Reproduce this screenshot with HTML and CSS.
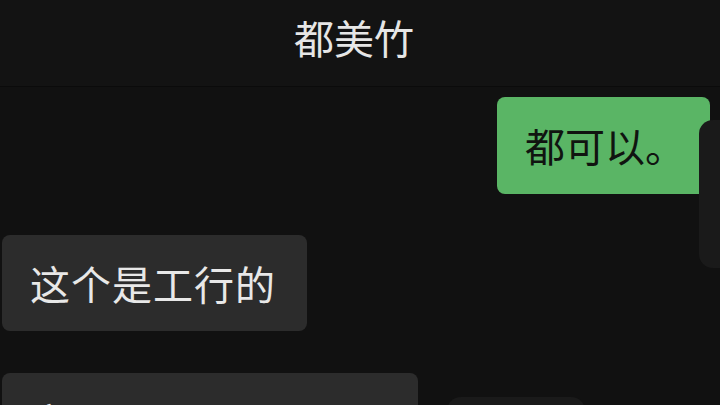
FILE: index.html
```html
<!DOCTYPE html>
<html lang="zh">
<head>
<meta charset="utf-8">
<link rel="stylesheet" href="styles.css">
</head>
<body>
<div class="screen">
  <header class="header">都美竹</header>
  <main class="messages">
    <div class="row row-out"><div class="bubble bubble-out">都可以。</div></div>
    <div class="row row-in"><div class="bubble bubble-in">这个是工行的</div></div>
    <div class="row row-in"><div class="bubble bubble-in bubble-wide">文</div></div>
  </main>
  <div class="overlay overlay-side"></div>
  <div class="overlay overlay-bottom"></div>
</div>
</body>
</html>
```
FILE: styles.css
```css
html, body {
  margin: 0;
  padding: 0;
  background: #111111;
}
.screen {
  position: relative;
  width: 720px;
  height: 405px;
  overflow: hidden;
  background: #111111;
  font-family: "Noto Sans CJK SC", "Noto Sans", sans-serif;
}
.header {
  height: 87px;
  display: flex;
  align-items: center;
  justify-content: center;
  padding-bottom: 12px;
  padding-right: 12px;
  box-sizing: border-box;
  background: #131313;
  border-bottom: 1px solid #0b0b0b;
  color: #e6e6e6;
  font-size: 40px;
  line-height: 40px;
}
.messages {
  display: flex;
  flex-direction: column;
  gap: 41px;
  padding-top: 10px;
}
.row {
  display: flex;
}
.row-out {
  justify-content: flex-end;
  padding-right: 10px;
}
.row-in {
  justify-content: flex-start;
  padding-left: 2px;
}
.bubble {
  font-size: 40px;
  line-height: 40px;
  border-radius: 8px;
  white-space: nowrap;
}
.bubble-out {
  background: #5ab565;
  color: #101410;
  padding: 28px 25px 29px 28px;
}
.bubble-in {
  background: #2c2c2c;
  color: #e8e8e8;
  letter-spacing: 1px;
  padding: 28px 31px 28px 28px;
}
.bubble-wide {
  width: 357px;
  margin-top: 1px;
}
.overlay {
  position: absolute;
  background: #1a1a1a;
  border-radius: 14px;
}
.overlay-side {
  left: 699px;
  top: 120px;
  width: 40px;
  height: 148px;
}
.overlay-bottom {
  left: 447px;
  top: 397px;
  width: 138px;
  height: 40px;
}
```
